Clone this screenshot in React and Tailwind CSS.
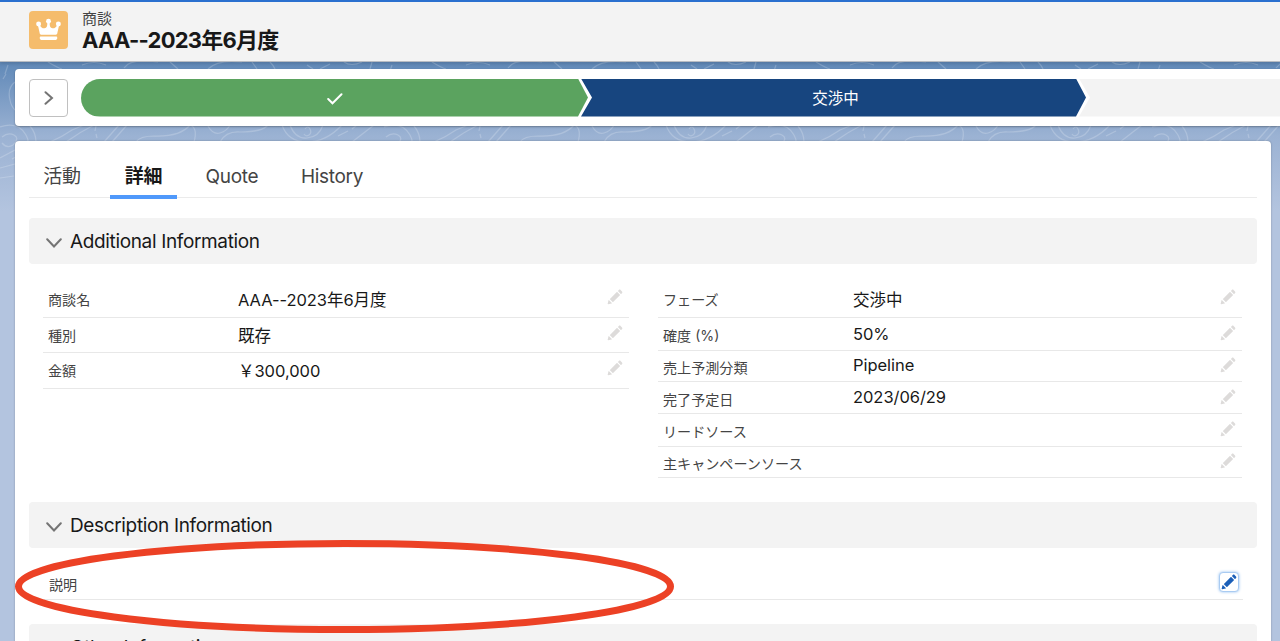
const opportunityFields = [
	{ label: "商談名", value: "AAA--2023年6月度", row: "h-9 pt-px", text: "pt-[5px]" },
	{ label: "種別", value: "既存", row: "h-[35px] pt-px", text: "pt-[5px]" },
	{ label: "金額", value: "￥300,000", row: "h-9 pt-px", text: "pt-[5px]" }
];

const stageFields = [
	{ label: "フェーズ", value: "交渉中", row: "h-9 pt-px", text: "pt-[5px]" },
	{ label: "確度 (%)", value: "50%", row: "h-[33px] pt-px", text: "pt-[3px]" },
	{ label: "売上予測分類", value: "Pipeline", row: "h-[31px]", text: "pt-0.5" },
	{ label: "完了予定日", value: "2023/06/29", row: "h-8 pt-px", text: "pt-0.5" },
	{ label: "リードソース", value: "", row: "h-[33px] pt-px", text: "pt-[3px]" },
	{ label: "主キャンペーンソース", value: "", row: "h-[31px]", text: "pt-[3px]" }
];

const tabs = [
	{ name: "活動", style: "ml-3.5 w-[38px]" },
	{ name: "詳細", style: "ml-[29px] w-[67px]", active: true },
	{ name: "Quote", style: "ml-7 w-[54px]" },
	{ name: "History", style: "ml-[41px] w-[64px]" }
];

function Pencil({ className }) {
	return (
		<svg viewBox="0 0 52 52" className={className} fill="currentColor">
			<path d="M9.5 33.4l8.9 8.9c.4.4 1 .4 1.4 0L42 20c.4-.4.4-1 0-1.4l-8.8-8.8c-.4-.4-1-.4-1.4 0L9.5 32.1c-.4.4-.4 1 0 1.3z" />
			<path d="M36.1 5.7c-.4.4-.4 1 0 1.4l8.8 8.8c.4.4 1 .4 1.4 0l2.5-2.5c1.6-1.5 1.6-3.9 0-5.5l-4.7-4.7c-1.6-1.6-4.1-1.6-5.7 0l-2.3 2.5z" />
			<path d="M2.1 48.2c-.2 1 .7 1.9 1.7 1.7l10.9-2.6c.4-.1.7-.3.9-.5l.2-.2c.2-.2.3-.9-.1-1.3l-9-9c-.4-.4-1.1-.3-1.3-.1l-.2.2c-.3.3-.4.6-.5.9L2.1 48.2z" />
		</svg>
	);
}

function Crown() {
	return (
		<svg viewBox="0 0 100 100" className="h-[38px] w-[39px]" fill="#fff">
			<circle cx="24" cy="34" r="6.5" />
			<circle cx="50" cy="27" r="6.500" />
			<circle cx="76" cy="34" r="6.500" />
			<path d="M22 37l5 22.500c.3 1.700 1.800 3 3.500 3h39c1.700 0 3.200-1.300 3.500-3L78 37l-6 1c-2 5-6 8-11.500 7.500C54.500 45 53 40 53 31h-6c0 9-1.500 14-7.500 14.500C34 46 30 43 28 38z" />
			<path d="M70 67H30c-1.700 0-3 1.300-3 3v2c0 2.200 1.800 4 4 4h38c2.200 0 4-1.800 4-4v-2c0-1.700-1.300-3-3-3z" />
		</svg>
	);
}

function Contours() {
	return (
		<svg className="absolute inset-0 h-full w-full" fill="none">
			<defs>
				<pattern id="contours" width="384" height="200" patternUnits="userSpaceOnUse">
					<g stroke="#fff" strokeOpacity=".2" strokeWidth="1.2" fill="none">
						<path d="M8 65l-3 9M6 74l-3 5M15 82q-8 6-5 18 1 6 5 10M0 127q18-6 26 8t-14 24M2 137q6-5 12-2t-1 10q-6 4-11-2M0 158l15-8M0 168l15-4M0 178l14-2" />
						<path d="M30 126q6 7 6 16M50 142q12-5 22-12l12-5M66 142q14-10 28-17M96 126l-1 5M96 134l1 4M104 142l15-17M112 142l15-17M136 142q4-6 18-6 26 1 36-11M194 142q4-14-4-17M208 126q5 9 12 7t10-8M220 142q6-11 20-10 22 0 28-7" />
						<path d="M282 125q6 17 25 17t35-17M290 125q5 14 17 13t16-13M305 129q3-4 5 0t-1 6-5-1M338 136l10-5M352 129l5-4M352 142l22-17" />
						<path d="M48 62q10 6 14 7M82 65q12-5 24 0M124 68q6-10 34-6M170 62l8 7M208 69q10-10 34-7M252 62l5 7M270 62q4 4 5 7M307 65l6 4M320 69l10-5M344 62q7 5 18 0M370 69l2-7" />
					</g>
				</pattern>
			</defs>
			<rect width="100%" height="200" fill="url(#contours)" />
		</svg>
	);
}

function Section({ title }) {
	return (
		<div className="flex h-[46px] shrink-0 items-center rounded bg-[#f3f3f3] pl-[17px]">
			<svg viewBox="0 0 16 10" className="mt-1 h-2.5 w-4" fill="none" stroke="#747474" strokeWidth="2" strokeLinecap="round">
				<path d="M1.200 1.200L8 8.500l6.800-7.300" />
			</svg>
			<h2 className="mt-0.5 ml-2 text-[19px] tracking-[-0.35px] text-[#181818]">{title}</h2>
		</div>
	);
}

function Field({ label, value, row, text }) {
	return (
		<div className={`flex items-start border-b border-[#e8e8e8] pl-[5px] ${row}`}>
			<span className="w-[190px] pt-[7px] text-[14.1px] leading-5 text-[#444]">{label}</span>
			<span className={`flex-1 text-[16.5px] leading-6 tracking-[-0.05px] text-[#181818] ${text}`}>{value}</span>
			<Pencil className="mt-1.5 mr-1.5 size-4 text-[#dddbda]" />
		</div>
	);
}

export default function App() {
	return (
		<div className="relative flex h-[641px] w-[1280px] flex-col overflow-hidden bg-[#b3c4df] font-[Inter,'Noto_Sans_CJK_JP',sans-serif]">
			<div className="absolute inset-x-0 top-[61px] h-[150px] bg-linear-to-b from-[#5f88b7] via-[#9bb2d3] via-50% to-[#b3c4df]" />
			<Contours />

			<header className="relative flex h-[62px] shrink-0 items-start border-t-2 border-b border-t-[#2a70cf] border-b-[#b8bcc2] bg-[#f3f3f3] pl-[29px] shadow-[0_2px_3px_rgba(0,0,0,0.12)]">
				<div className="mt-[9px] overflow-hidden rounded bg-[#f5bc6c]">
					<Crown />
				</div>
				<div className="ml-3.5 pt-[7px]">
					<div className="text-[15px] leading-5 text-[#444]">商談</div>
					<h1 className="-mt-px text-[22px] leading-6 font-bold tracking-[-0.75px] text-[#181818]">AAA--2023年6月度</h1>
				</div>
			</header>

			<div className="relative mt-[7px] ml-[15px] flex h-[57px] shrink-0 items-center rounded-l bg-white pl-3.5 shadow-[0_1px_2px_rgba(0,0,0,0.3)]">
				<button className="flex h-[38px] w-[39px] items-center justify-center rounded border border-[#c0c0c0] bg-white">
					<svg viewBox="0 0 10 14" className="h-3.5 w-2.5" fill="none" stroke="#747474" strokeWidth="2" strokeLinecap="round">
						<path d="M1.500 1.200L8 7l-6.500 5.800" />
					</svg>
				</button>
				<div className="ml-[13px] flex h-[38px] flex-1">
					<div className="flex w-[507px] items-center justify-center rounded-l-full bg-[#5ba35f] pt-0.5 [clip-path:polygon(0_0,497px_0,100%_50%,497px_100%,0_100%)]">
						<svg viewBox="0 0 16 12" className="h-3 w-4" fill="none" stroke="#fff" strokeWidth="2" strokeLinecap="round">
							<path d="M1.200 6l4.300 4.300 9-9" />
						</svg>
					</div>
					<div className="-ml-[7px] flex w-[505px] items-center justify-center bg-[#17457f] pt-0.5 pl-1 text-[15.5px] text-white [clip-path:polygon(0_0,495px_0,100%_50%,495px_100%,0_100%,11px_50%)]">
						交渉中
					</div>
					<div className="-ml-[7px] flex-1 bg-[#f3f3f3] [clip-path:polygon(0_0,100%_0,100%_100%,0_100%,11px_50%)]" />
				</div>
			</div>

			<main className="relative mt-[15px] mr-[9px] ml-[15px] flex h-[540px] shrink-0 flex-col rounded bg-white px-3.5 shadow-[0_0_2px_rgba(0,0,0,0.3)]">
				<nav className="flex h-[57px] shrink-0 border-b border-[#ebebeb]">
					{tabs.map((tab) => (
						<div
							key={tab.name}
							className={`flex h-[58px] items-center justify-center text-[19px] tracking-[-0.3px] whitespace-nowrap ${tab.style} ${
								tab.active
									? "border-b-4 border-[#5099fb] pt-[18px] font-bold text-[#181818]"
									: "pt-[14px] text-[#444]"
							}`}
						>
							{tab.name}
						</div>
					))}
				</nav>

				<div className="mt-5 flex flex-col">
					<Section title="Additional Information" />
					<div className="flex h-[238px] gap-[29px] px-[15px] pt-[18px]">
						<div className="-ml-px w-[586px]">
							{opportunityFields.map((f) => (
								<Field key={f.label} {...f} />
							))}
						</div>
						<div className="flex-1">
							{stageFields.map((f) => (
								<Field key={f.label} {...f} />
							))}
						</div>
					</div>

					<Section title="Description Information" />
					<div className="mr-3.5 ml-[15px] mt-[18px] mb-6 flex h-[34px] items-start border-b border-[#e8e8e8] pl-[5px]">
						<span className="flex-1 pt-[9px] text-[14.1px] leading-5 text-[#444]">説明</span>
						<span className="mt-1.5 mr-1 flex size-5 items-center justify-center rounded border border-[#a9cbf2] bg-white shadow-[0_0_3px_#8fbdf0]">
							<Pencil className="size-4 shrink-0 text-[#1b5fb8]" />
						</span>
					</div>

					<Section title="Other Information" />
				</div>
			</main>

			<svg className="absolute top-[539px] left-[14px] h-[96px] w-[661px]" fill="none">
				<ellipse cx="330.500" cy="47.500" rx="326" ry="43" stroke="#ec4125" strokeWidth="7" />
			</svg>
		</div>
	);
}
